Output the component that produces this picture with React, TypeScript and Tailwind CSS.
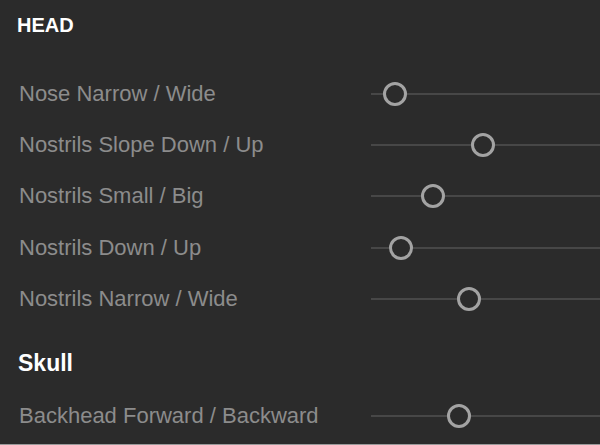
import React from "react";

const rows = [
  { label: "Nose Narrow / Wide", pos: 24 },
  { label: "Nostrils Slope Down / Up", pos: 112 },
  { label: "Nostrils Small / Big", pos: 62 },
  { label: "Nostrils Down / Up", pos: 30 },
  { label: "Nostrils Narrow / Wide", pos: 98 },
];

function Row({ label, pos, className = "" }: { label: string; pos: number; className?: string }) {
  return (
    <div className={`flex items-center h-[51.3px] ${className}`}>
      <div className="flex-1 pl-[19px] text-[22px] text-[#8c8c8c] leading-none whitespace-nowrap">{label}</div>
      <div className="relative w-[229px] h-[2px] bg-[#474747]">
        <div
          className="absolute top-1/2 w-[24px] h-[24px] -translate-x-1/2 -translate-y-1/2 rounded-full border-[3px] border-[#a3a3a3] bg-[#2b2b2b]"
          style={{ left: pos }}
        />
      </div>
    </div>
  );
}

export default function App() {
  return (
    <div
      className="w-[600px] h-[445px] bg-[#2b2b2b] border-b border-[#9a9a9a] flex flex-col overflow-hidden"
      style={{ fontFamily: '"Liberation Sans", Arial, sans-serif' }}
    >
      <div className="h-[49px] flex items-center pl-[17px] text-[20px] font-bold text-white">HEAD</div>
      <div className="mt-[19px] flex flex-col">
        {rows.map((r) => (
          <Row key={r.label} label={r.label} pos={r.pos} />
        ))}
      </div>
      <div className="mt-[24px] h-[30px] flex items-center pl-[18px] text-[23px] font-bold text-white">Skull</div>
      <Row label="Backhead Forward / Backward" pos={88} className="mt-[12px]" />
    </div>
  );
}
